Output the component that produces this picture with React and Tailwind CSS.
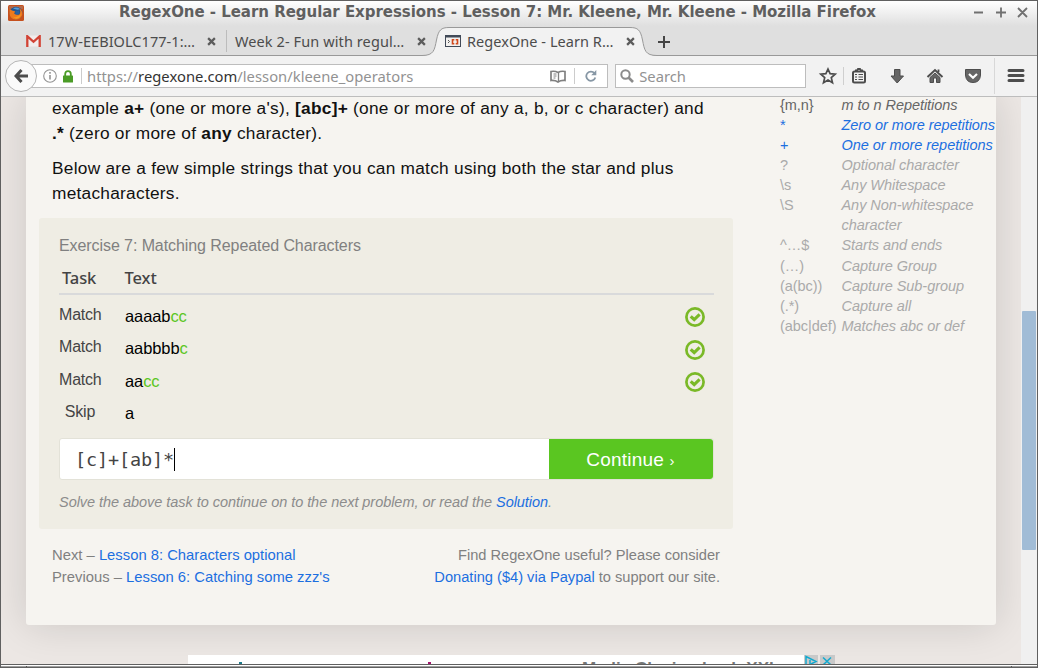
import React from "react";

const TabClose = () => (
  <svg width="9" height="9" viewBox="0 0 8 8" className="mt-px shrink-0">
    <path d="M1 1L7 7M7 1L1 7" stroke="#5c5c5c" strokeWidth="2" />
  </svg>
);

const FirefoxLogo = () => (
  <svg width="16" height="16" viewBox="0 0 16 16">
    <rect width="16" height="16" rx="1.5" fill="#c5501d" />
    <rect x="1" y="1" width="14" height="3" fill="#b56a4a" />
    <circle cx="8" cy="8" r="6.3" fill="#24558f" />
    <path d="M5 3.5Q8 1.5 12 4Q10 5 8.500 4.500Z" fill="#5aa0d8" />
    <path d="M1.500 4L4 5.500L7.500 6.500L6 8.200Q8 10.500 11.500 9.500Q13 7 11.500 3.500Q15 6 14.200 10Q12 14.800 7.500 14.500Q2 14 1.500 8.500Z" fill="#ef7a1c" />
    <path d="M8 6L11 5.500L11.500 8.500L9 9.500L7 8.500Z" fill="#2b62a0" />
    <path d="M4.500 11.500Q9 14 13 9Q12 13.500 8 13.700Z" fill="#f79a22" />
  </svg>
);

const GmailLogo = () => (
  <svg width="15" height="12" viewBox="0 0 15 12" className="mt-px">
    <rect x="0.500" y="0.500" width="14" height="11" fill="#f1ecec" />
    <path d="M1.300 12V1.200L7.500 6.800L13.700 1.200V12" fill="none" stroke="#d14335" strokeWidth="2.300" />
  </svg>
);

const RegexLogo = () => (
  <svg width="16" height="12" viewBox="0 0 16 12" className="mt-px">
    <rect x="0.500" y="0.500" width="15" height="11" fill="#f2f0ee" stroke="#414a58" />
    <rect width="16" height="2.500" fill="#414a58" />
    <path d="M3 5L4.500 6.500L3 8" fill="none" stroke="#555" />
    <path d="M9.300 4.800H7.500V8.700H9.300M10.700 4.800H12.500V8.700H10.700" fill="none" stroke="#d2491d" strokeWidth="1.600" />
  </svg>
);

const Check = () => (
  <svg width="20" height="20" viewBox="0 0 20 20">
    <circle cx="10" cy="10" r="8.600" fill="none" stroke="#7ab927" strokeWidth="2.700" />
    <path d="M5.700 9.300L9.200 12.500L14.600 7.300" fill="none" stroke="#7ab927" strokeWidth="3.100" />
  </svg>
);

function TitleBar() {
  return (
    <div className="flex h-[25px] shrink-0 bg-linear-to-b from-white to-[#dfdfdf]">
      <div className="w-[118px] pt-1 pl-[7px]"><FirefoxLogo /></div>
      <div className="w-[850px] whitespace-nowrap font-['DejaVu_Sans',sans-serif] text-[15px] leading-[23px] font-bold tracking-[-0.035px] text-[#5f5f5f]">
        RegexOne - Learn Regular Expressions - Lesson 7: Mr. Kleene, Mr. Kleene - Mozilla Firefox
      </div>
      <svg width="60" height="20" viewBox="0 0 60 20" fill="none" stroke="#707070" strokeWidth="1.800" className="mt-px">
        <path d="M5 10.500H14M27 10.500H37M32 5.500V15.500M49 6L58 15M58 6L49 15" />
      </svg>
    </div>
  );
}

function TabBar() {
  return (
    <div className="relative flex h-[30px] shrink-0 border-b border-[#999] bg-[#dfdfdf] font-['Noto_Sans',sans-serif] text-[14.5px] text-[#4c4c4c]">
      <svg width="240" height="30" viewBox="0 0 240 30" className="absolute top-0 left-[421px]">
        <path d="M0 30V29.500C12 29.500 12.500 24 14.500 14C16.500 4 19 1.500 27 1.500H208C216 1.500 218.500 4 220.500 14C222.500 24 223 29.500 235 29.500V30Z" fill="#f2f2f2" />
        <path d="M0 29.500C12 29.500 12.500 24 14.500 14C16.500 4 19 1.500 27 1.500H208C216 1.500 218.500 4 220.500 14C222.500 24 223 29.500 235 29.500" fill="none" stroke="#999" />
      </svg>
      <div className="relative flex w-[225px] items-center pr-[10px] pl-[25px]">
        <GmailLogo />
        <span className="mt-[2px] ml-[7px] flex-1 whitespace-nowrap tracking-[0.05px]">17W-EEBIOLC177-1:…</span>
        <TabClose />
      </div>
      <div className="relative flex w-[209px] items-center pr-[9px] pl-[9px]">
        <span className="absolute top-1 left-0 h-[22px] w-px bg-[#bcbcbc]" />
        <span className="mt-[2px] flex-1 whitespace-nowrap tracking-[0.1px]">Week 2- Fun with regul…</span>
        <TabClose />
      </div>
      <div className="relative flex w-[200px] items-center pl-[10px]">
        <RegexLogo />
        <span className="mt-[2px] ml-[6px] w-[159px] whitespace-nowrap tracking-[0.05px]">RegexOne - Learn R…</span>
        <TabClose />
      </div>
      <svg width="12" height="12" viewBox="0 0 12 12" className="relative mt-[10px] ml-[23px]">
        <path d="M0 6H12M6 0V12" stroke="#454545" strokeWidth="2" />
      </svg>
    </div>
  );
}

function NavBar() {
  return (
    <div className="relative flex h-[41px] shrink-0 border-b border-[#bdbdbd] bg-[#f2f2f2] font-['Noto_Sans',sans-serif] text-[14.75px]">
      <div className="mt-2 ml-[18px] flex h-6 w-[590px] items-center border border-[#bdbdbd] bg-white pl-[23px]">
        <svg width="14" height="14" viewBox="0 0 14 14" fill="none" stroke="#949494">
          <circle cx="7" cy="7" r="6.300" strokeWidth="1.100" /><path d="M7 6V10.500M7 3V4.700" strokeWidth="1.600" />
        </svg>
        <svg width="10" height="13" viewBox="0 0 10 13" className="ml-[6px]">
          <path d="M2.200 6V4Q2.200 1.200 5 1.200T7.800 4V6" fill="none" stroke="#4b9c27" strokeWidth="1.800" /><rect y="5.500" width="10" height="7" rx="0.500" fill="#4b9c27" />
        </svg>
        <span className="ml-2 h-4 w-px bg-[#ccc]" />
        <span className="mt-px ml-[5px] w-[463px] whitespace-nowrap tracking-[0.03px] text-[#929292]">https://<span className="text-[#333]">regexone.com</span>/lesson/kleene_operators</span>
        <svg width="16" height="13" viewBox="0 0 16 13" fill="none" stroke="#808080">
          <path d="M8 2.500Q5 .7 1 1.500V10.500Q5 10 8 12Q11 10 15 10.500V1.500Q11 .7 8 2.500" strokeWidth="1.700" />
          <path d="M3.500 4H6.500M3.500 6H6.500M3.500 8H5.500" strokeWidth="1" /><path d="M8.500 2.500V11" strokeWidth="1.300" />
        </svg>
        <span className="ml-2 h-4 w-px bg-[#ccc]" />
        <svg width="12" height="12" viewBox="0 0 12 12" className="ml-[10px]">
          <path d="M9.500 3.300A4.600 4.600 0 1 0 10.300 7.500" fill="none" stroke="#8797a5" strokeWidth="1.800" /><path d="M11.300 0V5.200H6.200Z" fill="#8797a5" />
        </svg>
      </div>
      <div className="mt-2 ml-[7px] flex h-6 w-[191px] items-center border border-[#bdbdbd] bg-white pl-1 text-[#929292]">
        <svg width="14" height="14" viewBox="0 0 14 14" fill="none" stroke="#8b8b8b" strokeWidth="2"><circle cx="5.500" cy="5.500" r="4.200" /><path d="M8.500 8.500L13 13" strokeWidth="2.600" /></svg>
        <span className="mt-px ml-[5px]">Search</span>
      </div>
      <svg width="231" height="40" viewBox="806 56 231 40" fill="none" stroke="#4d4d4d" className="shrink-0">
        <path d="M828 69L830.100 73.700L835.200 74.200L831.300 77.600L832.500 82.700L828 80L823.500 82.700L824.700 77.600L820.800 74.200L825.900 73.700Z" strokeWidth="1.700" />
        <path d="M843.500 67V85" stroke="#cfcfcf" />
        <rect x="853" y="71.500" width="12" height="11" rx="1.500" strokeWidth="2" />
        <path d="M855 70.500H857L858 69H860L861 70.500H863" strokeWidth="1.800" />
        <path d="M855 74.500H857M858.500 74.500H863M855 77H857M858.500 77H863M855 79.500H857M858.500 79.500H863" strokeWidth="1.200" />
        <path d="M894.500 69.500H900V76H903.500L897.200 83L891 76H894.500Z" fill="#666" />
        <path d="M927.500 77L935 70L942.500 77" strokeWidth="2" />
        <path d="M930 77.500L935 73L940 77.500V82.500H936.500V78H933.500V82.500H930Z" fill="#666" />
        <path d="M938.500 69.500V72" strokeWidth="1.800" />
        <path d="M965.500 69.500H980.500V75Q980 82.500 973 82.500T965.500 75Z" fill="#666" />
        <path d="M969 74L973 77.700L977 74" stroke="white" strokeWidth="2.200" />
        <path d="M994.500 58V94" stroke="#d8d8d8" />
        <path d="M1009 70.500H1023M1009 75.500H1023M1009 80.500H1023" strokeWidth="3" strokeLinecap="round" />
      </svg>
      <div className="absolute top-1 left-1 flex size-8 items-center justify-center rounded-full border border-[#b5b5b5] bg-[#fafafa]">
        <svg width="14" height="14" viewBox="0 0 14 14" fill="none" stroke="#4d4d4d" strokeWidth="3"><path d="M7.500 1L2 7L7.500 13M2 7H14" /></svg>
      </div>
    </div>
  );
}

const A = ({ children }) => <a className="text-[#1c6fe0]">{children}</a>;

const rows = [
  ["Match", "aaaab", "cc", true],
  ["Match", "aabbbb", "c", true],
  ["Match", "aa", "cc", true],
  ["Skip", "a", "", false],
];

function Exercise() {
  return (
    <section className="mt-3 -ml-[13px] h-[311px] w-[694px] rounded-[3px] bg-[#efede4] pt-[18px] pr-5 pl-5">
      <h2 className="text-base leading-5 tracking-[-0.08px] text-[#808080]">Exercise 7: Matching Repeated Characters</h2>
      <div className="mt-[9px] flex h-[30px] w-[655px] border-b-2 border-[#d9dadb] font-['Noto_Sans',sans-serif] text-[16.5px] leading-[26px] font-medium tracking-[-0.1px] text-[#444]">
        <span className="w-[65.500px] pl-[3px]">Task</span><span>Text</span>
      </div>
      <div className="mt-1">
        {rows.map(([task, plain, hit, ok], i) => (
          <div key={i} className="flex h-[32.400px]">
            <span className="w-[42px] text-center text-base leading-[31px] tracking-[-0.2px] text-[#444]">{task}</span>
            <span className="ml-6 w-[560px] text-[16.5px] leading-[35px] tracking-[-0.1px] text-black">{plain}<span className="text-[#5ac621]">{hit}</span></span>
            <span className="pt-[8.300px]">{ok && <Check />}</span>
          </div>
        ))}
      </div>
      <div className="mt-[9.400px] flex h-[42px] w-[655px] items-stretch rounded-[3px] border border-[#e3e2d8] bg-white">
        <div className="flex w-[489px] items-center pt-px pl-[15px] font-['DejaVu_Sans_Mono',monospace] text-[18.5px] tracking-[-0.15px] text-[#444]">
          [c]+[ab]*<span className="h-[23px] w-px bg-black" />
        </div>
        <button className="w-[164px] rounded-r-[3px] bg-[#5ac621] pt-[2px] pr-px text-[19px] tracking-[0.2px] text-white">Continue <span className="text-[15px]">›</span></button>
      </div>
      <p className="mt-3 text-[14.5px] leading-5 tracking-[-0.045px] whitespace-nowrap text-[#8c8c8c] italic">
        Solve the above task to continue on to the next problem, or read the <A>Solution</A>.
      </p>
    </section>
  );
}

const reference = [
  ["{m,n}", "m to n Repetitions", "text-[#666]"],
  ["*", "Zero or more repetitions", "text-[#1c6fe0]"],
  ["+", "One or more repetitions", "text-[#1c6fe0]"],
  ["?", "Optional character", "text-[#aaa]"],
  ["\\s", "Any Whitespace", "text-[#aaa]"],
  ["\\S", "Any Non-whitespace character", "text-[#aaa]"],
  ["^…$", "Starts and ends", "text-[#aaa]"],
  ["(…)", "Capture Group", "text-[#aaa]"],
  ["(a(bc))", "Capture Sub-group", "text-[#aaa]"],
  ["(.*)", "Capture all", "text-[#aaa]"],
  ["(abc|def)", "Matches abc or def", "text-[#aaa]"],
];

function Page() {
  return (
    <div className="flex h-[567px] shrink-0 overflow-hidden bg-[#ece7e4]">
      <div className="flex w-[1020px] flex-col overflow-hidden pl-[25px]">
        <main className="flex h-[528px] w-[970px] shrink-0 rounded-b-[3px] bg-[#f6f4f0] pl-[26px] shadow-[0_0_40px_rgba(0,0,0,0.14)]">
          <div className="w-[728px] shrink-0">
            <div className="-mt-px text-[17.3px] leading-[25px] tracking-[0.26px] whitespace-nowrap text-[#111]">
              <p>example <b>a+</b> (one or more a's), <b>[abc]+</b> (one or more of any a, b, or c character) and<br /><b>.*</b> (zero or more of <b>any</b> character).</p>
              <p className="mt-[10px]">Below are a few simple strings that you can match using both the star and plus<br />metacharacters.</p>
            </div>
            <Exercise />
            <div className="mt-[15px] flex w-[668px] justify-between leading-[22px] text-[#808080]">
              <div className="text-[14.800px]">Next – <A>Lesson 8: Characters optional</A><br />Previous – <A>Lesson 6: Catching some zzz's</A></div>
              <div className="text-right text-[14.650px]">Find RegexOne useful? Please consider<br /><A>Donating ($4) via Paypal</A> to support our site.</div>
            </div>
          </div>
          <aside className="-mt-[2px] w-[216px] text-[14.5px] leading-[20.060px] tracking-[-0.05px]">
            {reference.map(([code, label, color]) => (
              <div key={code} className={"flex " + color}>
                <span className="w-[61.500px] shrink-0 whitespace-nowrap">{code}</span>
                <span className="w-[157px] shrink-0 italic">{label}</span>
              </div>
            ))}
          </aside>
        </main>
        <div className="mt-[30px] ml-[162px] flex h-[9px] w-[647px] shrink-0 overflow-hidden">
          <div className="relative w-[616px] bg-white">
            <span className="absolute top-[7px] left-[51px] h-[2px] w-[3px] bg-[#1d7a8c]" />
            <span className="absolute top-[7px] left-[240px] h-[2px] w-[3px] bg-[#a3156d]" />
            <span className="absolute top-[5px] left-[394px] text-[17px] leading-[17px] font-bold whitespace-nowrap text-[#777]">Media Closing bash XXL</span>
          </div>
          <svg width="31" height="9" viewBox="0 0 31 9" fill="none" stroke="#13a9cf" strokeWidth="1.500">
            <path d="M0 0H14V9H0ZM16 0H31V9H16Z" fill="#c9c9c9" stroke="none" /><path d="M2 9V1.500L12 6.500L7 9M6 5V9M19 2.500L27 10M27 2.500L19 10" />
          </svg>
        </div>
      </div>
      <div className="w-4 bg-[#f0f0f0] pt-[214px] pl-px"><div className="h-[239px] w-[14px] rounded-[1px] bg-[#a1bcd6]" /></div>
    </div>
  );
}

export default function App() {
  return (
    <div className="flex h-[668px] w-[1038px] flex-col overflow-hidden border border-[#606060] bg-white font-['Liberation_Sans',Arial,sans-serif]">
      <TitleBar />
      <TabBar />
      <NavBar />
      <Page />
      <div className="h-px shrink-0 bg-[#606060]" />
      <div className="mt-px flex h-px shrink-0 justify-between bg-[#a0a0a0] px-[25px]"><span className="w-px bg-[#555]" /><span className="w-px bg-[#555]" /></div>
    </div>
  );
}
